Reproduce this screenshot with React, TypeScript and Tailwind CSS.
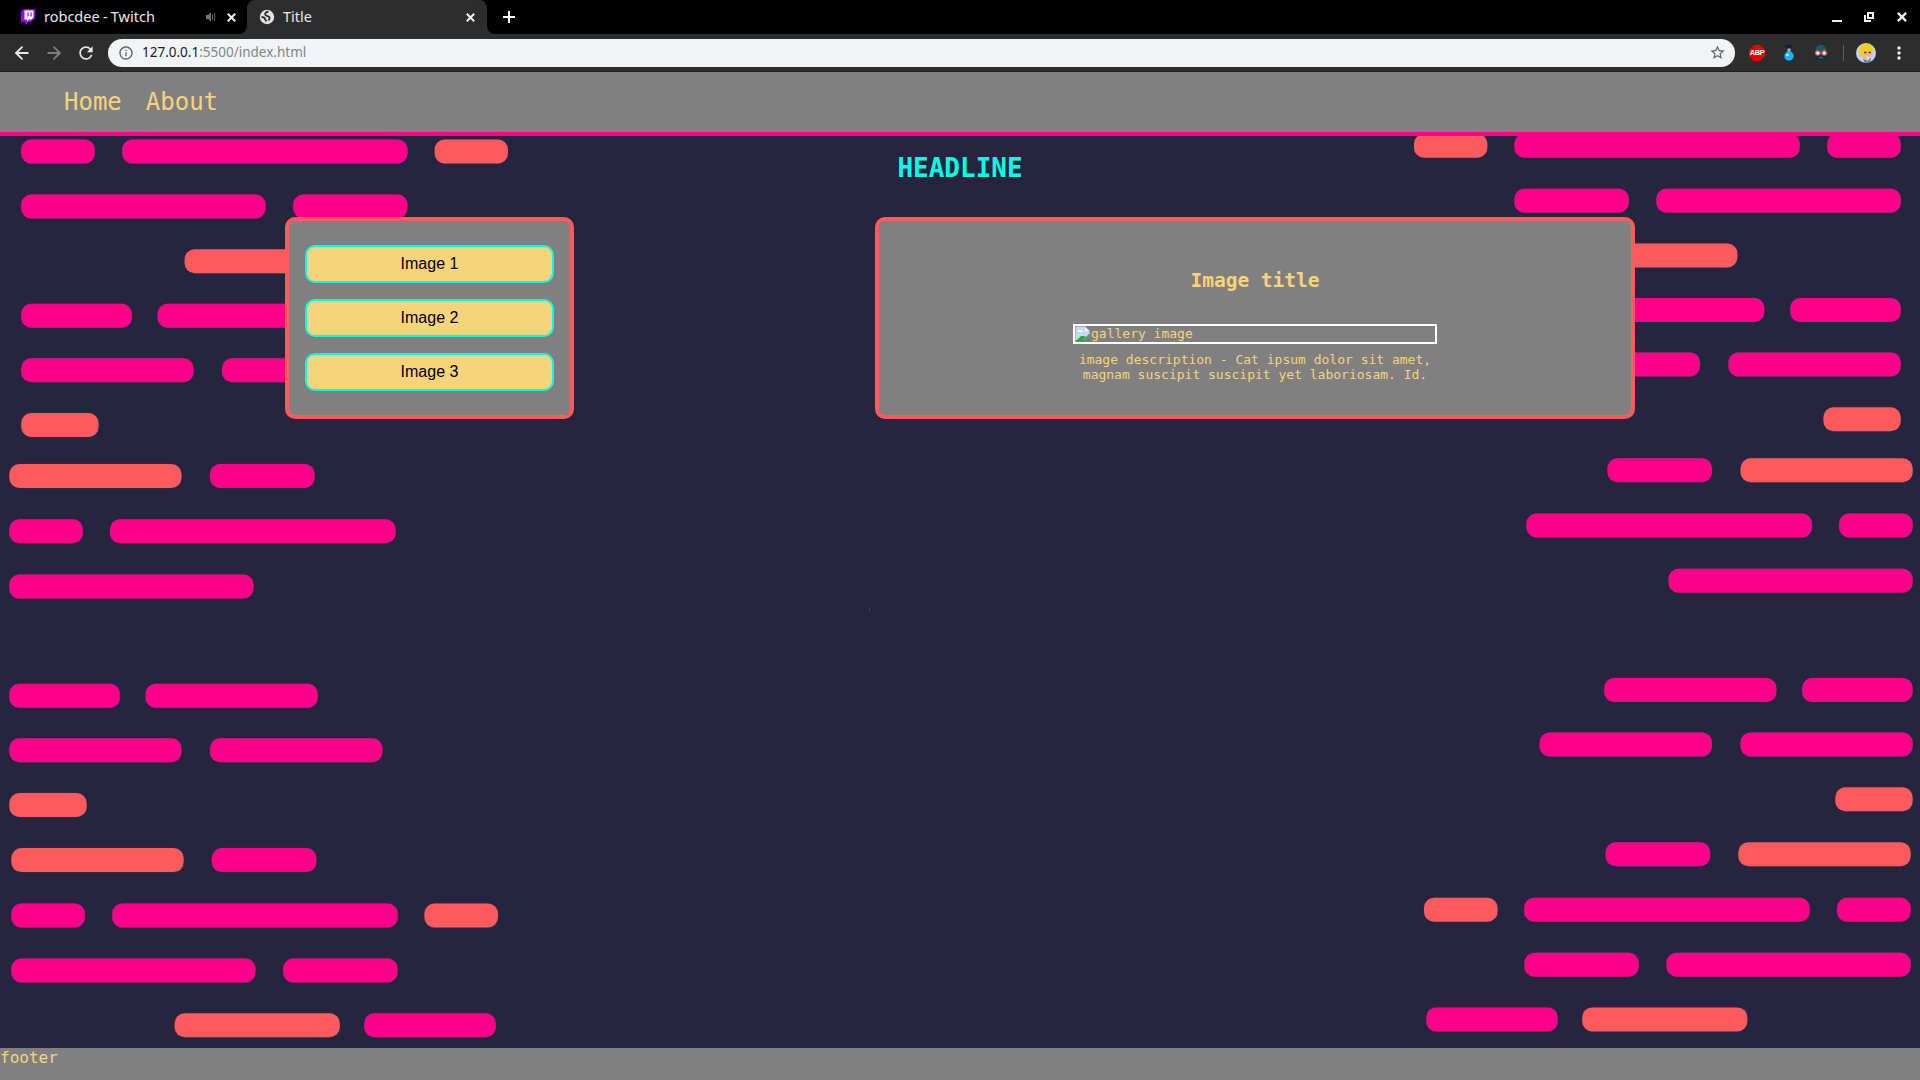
import { ArrowLeft, ArrowRight } from "lucide-react";
import { MdRefresh, MdInfoOutline, MdStarBorder } from "react-icons/md";

type Pill = [x: number, y: number, w: number, coral?: boolean];

const pills: Pill[] = [
  [21.2, 139.5, 73.6], [122.2, 139.5, 285.4], [434.6, 139.5, 73.4, true],
  [21.2, 194.5, 244.4], [293.2, 194.5, 114.4],
  [184.6, 249.3, 165, true],
  [21.2, 303.8, 110.6], [157.6, 303.8, 172.4],
  [21.2, 358.2, 172.4], [222, 358.2, 172.4],
  [21.2, 413, 77.4, true],
  [9.3, 464, 172.2, true], [210, 464, 104.6],
  [9.3, 519.3, 73.6], [110, 519.3, 285.6],
  [9.3, 574.6, 244.2],
  [9.3, 683.8, 110.6], [145.6, 683.8, 172.2],
  [9.3, 738.3, 172.2], [210, 738.3, 172.4],
  [9.3, 793, 77.4, true],
  [11.3, 848.1, 172.4, true], [211.8, 848.1, 104.6],
  [11.3, 903.5, 73.6], [112.2, 903.5, 285.6], [424.4, 903.5, 73.6, true],
  [11.3, 958.5, 244.2], [283.2, 958.5, 114.4],
  [174.6, 1013.2, 165.2, true], [364.2, 1013.2, 131.6],
];

function Pills() {
  return (
    <>
      {pills.map(([x, y, w, coral]) => (
        <rect key={`${x}-${y}`} x={x} y={y} width={w} height={24} rx={10} fill={coral ? "#ff5b5f" : "#ff008a"} stroke="#707070" strokeOpacity={0.35} strokeWidth={0.5} />
      ))}
    </>
  );
}

function Backdrop() {
  return (
    <svg className="absolute inset-0 z-0" width={1920} height={1080} aria-hidden="true">
      <Pills />
      <g transform="translate(1922 -5.8) scale(-1 1)">
        <Pills />
      </g>
      <rect x={869} y={608} width={1} height={3} fill="#44405c" />
      <rect x={281} y={593} width={2} height={1} fill="#302c48" />
    </svg>
  );
}

function Cross({ size = 9, w = 2 }: { size?: number; w?: number }) {
  return (
    <svg width={size} height={size} viewBox="0 0 9 9" stroke="#f1f1f1" strokeWidth={w} fill="none">
      <path d="M.8.8l7.4 7.4M8.2.8L.8 8.2" />
    </svg>
  );
}

function TabStrip() {
  return (
    <div className="flex h-[34px] items-center bg-black text-[14.5px] text-[#e8e8e8]">
      <div className="flex h-full w-[247px] items-center pl-5">
        <svg width="16" height="17" viewBox="0 0 16 17">
          <path d="M3.500 0H15v9l-4 4H8.500L5 16.500V13H1V3z" fill="#9b00ff" />
          <path d="M4.500 1.500H13.500V8.500L11.500 10.500H9L7 12.500V10.500H4.500z" fill="#fff" />
          <path d="M8 3.500v4M11 3.500v4" stroke="#9b00ff" strokeWidth="1.300" />
        </svg>
        <span className="ml-2 w-[110px] whitespace-nowrap [word-spacing:-0.5px]">robcdee - Twitch</span>
        <svg className="ml-[52px]" width="10" height="10" viewBox="0 0 10 10">
          <path d="M0 3h2.500L5 0v10L2.500 7H0z" fill="#777" />
          <path d="M6.500 2v6M8.700 1v8" stroke="#666" strokeWidth="1" />
        </svg>
        <span className="ml-[11px]"><Cross /></span>
      </div>
      <div className="relative flex h-full w-[240px] items-center rounded-t-[8px] bg-[#2d2d2d] pl-[12px]">
        <svg className="absolute bottom-0 -left-2" width="8" height="8"><path d="M8 0v8H0A8 8 0 0 0 8 0" fill="#2d2d2d" /></svg>
        <svg className="absolute -right-2 bottom-0" width="8" height="8"><path d="M0 0v8h8A8 8 0 0 1 0 0" fill="#2d2d2d" /></svg>
        <svg width="16" height="16" viewBox="0 0 16 16">
          <circle cx="8" cy="8" r="7.200" fill="#e3e3e3" />
          <path d="M9.500 2.500C6.500 3 5.500 4.500 6.500 6c1 1.500 3.500.5 4 2.500.4 1.500-.5 2-1 3M2.500 8c2 0 3 .5 3.500 2 .2 1 1 1.500 1.500 2.500" fill="none" stroke="#2d2d2d" strokeWidth="1.800" />
        </svg>
        <span className="ml-2">Title</span>
        <span className="mr-[12px] ml-auto"><Cross /></span>
      </div>
      <svg className="ml-[16px]" width="12" height="12" stroke="#fff" strokeWidth="2"><path d="M6 0v12M0 6h12" /></svg>
      <div className="ml-auto flex items-center pr-[13px]">
        <span className="mt-2 h-[2px] w-[10px] bg-[#eee]" />
        <svg className="ml-[22px]" width="10" height="10" fill="none" stroke="#eee" strokeWidth="2"><path d="M4 1h5v5H4zM1 3v6h6" /></svg>
        <span className="ml-[23px] flex"><Cross size={10} /></span>
      </div>
    </div>
  );
}

function Toolbar() {
  return (
    <div className="flex h-[38px] items-center border-b border-[#1f1f1f] bg-[#2d2d2d]">
      <ArrowLeft className="ml-[12px]" size={20} color="#e8e8e8" strokeWidth={2.200} />
      <ArrowRight className="ml-[12px]" size={20} color="#7d7d7d" strokeWidth={2.200} />
      <MdRefresh className="ml-[12px]" size={20} color="#e8e8e8" />
      <div className="ml-[12px] flex h-7 w-[1627px] items-center rounded-full bg-[#f1f3f4] pr-[9px] pl-[10px] text-[13.500px] text-[#80868b]">
        <MdInfoOutline size={16} color="#5f6368" />
        <span className="ml-2"><span className="text-[#202124]">127.0.0.1</span>:5500/index.html</span>
        <MdStarBorder className="ml-auto" size={17} color="#5f6368" />
      </div>
      <span className="relative ml-[14px] flex size-4 items-center justify-center">
        <svg className="absolute inset-0" width="16" height="16" viewBox="0 0 16 16">
          <path d="M5 0h6l5 5v6l-5 5H5l-5-5V5z" fill="#e00" />
        </svg>
        <span className="relative font-['Liberation_Sans',sans-serif] text-[7.5px] leading-[10px] font-bold tracking-[-0.4px] text-white">ABP</span>
      </span>
      <svg className="ml-[19px]" width="10" height="16" viewBox="0 0 10 16">
        <path d="M2 0h6L6.500 4h-3z" fill="#0b1e50" />
        <path d="M3.500 3.500h3V7h-3z" fill="#9bb" />
        <circle cx="5" cy="11" r="4.700" fill="#1bb3f5" />
        <circle cx="3.500" cy="10" r="1.300" fill="#c4efff" />
      </svg>
      <svg className="ml-[19px]" width="16" height="15" viewBox="0 0 16 15">
        <path d="M2.500 6C2.500-2 13.500-2 13.500 6l1 6 1.500 3H0l1.500-3z" fill="#175b66" />
        <path d="M2 10h12l2 5H0z" fill="#152f3c" />
        <path d="M6 13.500l2-1.500 2 1.500" stroke="#4b8792" fill="none" />
        <circle cx="4.800" cy="8" r="2.200" fill="#fff" stroke="#ef5543" strokeWidth="1.200" />
        <circle cx="11.200" cy="8" r="2.200" fill="#fff" stroke="#ef5543" strokeWidth="1.200" />
      </svg>
      <span className="ml-[14px] h-4 w-px bg-[#5c5c5c]" />
      <svg className="ml-[12px]" width="20" height="20" viewBox="0 0 20 20">
        <circle cx="10" cy="10" r="10" fill="#c9cdf2" />
        <path d="M6 7h9l1 5-3 4H8l-3-4z" fill="#eeb982" />
        <path d="M3 10C2 3 7 0 11 1c5 0 7 4 6 7l-2 1-2-1.500-5 .5-2 5-1 1z" fill="#eed202" />
        <path d="M8 9.500h2.500M12.500 9.500h2.500" stroke="#554433" strokeWidth="1.300" />
        <path d="M7 16l4 1 4-2-1 4-5 1z" fill="#4f86b5" />
        <path d="M11 13l3 1-2 4-2-1z" fill="#f4d4a4" />
      </svg>
      <svg className="ml-[21px]" width="4" height="14" fill="#eee"><circle cx="2" cy="2" r="1.700" /><circle cx="2" cy="7" r="1.700" /><circle cx="2" cy="12" r="1.700" /></svg>
    </div>
  );
}

function BrokenImage() {
  return (
    <svg width="16" height="16" viewBox="0 0 16 16">
      <path d="M1 1h9l4 4v3L8 14H1z" fill="#c6d7f7" />
      <path d="M3 5.500c0-1.500 2-2 3-1 1.500 0 2 .5 2 1.500H3z" fill="#fff" />
      <path d="M1 15l5-5h3l2 1-4 4H1zM12 15l2.500-2.500V15z" fill="#17b02b" />
      <path d="M.5 15V.500H10l4.500 4.500v3" fill="none" stroke="#aeb2b8" />
      <path d="M10 1v4h4z" fill="#f5f7fb" />
    </svg>
  );
}

export default function App() {
  return (
    <div className="relative flex h-[1080px] w-[1920px] flex-col overflow-hidden bg-[#27243f] font-['DejaVu_Sans_Mono',monospace] text-[#f6d47c]">
      <Backdrop />
      <div className="relative z-10 font-['Noto_Sans',sans-serif]">
        <TabStrip />
        <Toolbar />
      </div>
      <nav className="relative z-10 flex h-16 items-center gap-6 border-b-4 border-[#ff008a] bg-[#808080] pl-16 text-2xl">
        <a>Home</a>
        <a>About</a>
      </nav>
      <main className="relative z-10 flex-1">
        <h1 className="mt-[17px] text-center text-[26px] leading-[30px] font-bold text-[#00ffe5]">HEADLINE</h1>
        <div className="mt-[34px] flex items-start pl-[285px]">
          <section className="flex h-[202px] w-[289px] flex-col gap-4 rounded-[10px] border-4 border-[#ff5b5f] bg-[#808080] px-4 pt-6">
            {["Image 1", "Image 2", "Image 3"].map((label) => (
              <button key={label} className="h-[38px] rounded-[10px] border-2 border-[#00ffe5] bg-[#f6d47c] font-['Liberation_Sans',sans-serif] text-base leading-none text-black">
                {label}
              </button>
            ))}
          </section>
          <section className="ml-[301px] flex h-[202px] w-[760px] flex-col items-center rounded-[10px] border-4 border-[#ff5b5f] bg-[#808080] text-[13px] leading-[15px]">
            <h2 className="mt-[48px] text-[19.500px] leading-[23px] font-bold">Image title</h2>
            <div className="mt-[32px] flex h-5 w-[364px] items-start border-2 border-white">
              <BrokenImage />
              <span>gallery image</span>
            </div>
            <p className="mt-2 w-[364px] text-center">
              image description - Cat ipsum dolor sit amet, magnam suscipit suscipit yet laboriosam. Id.
            </p>
          </section>
        </div>
      </main>
      <footer className="relative z-10 h-8 bg-[#808080] text-base leading-[19px]">footer</footer>
    </div>
  );
}
